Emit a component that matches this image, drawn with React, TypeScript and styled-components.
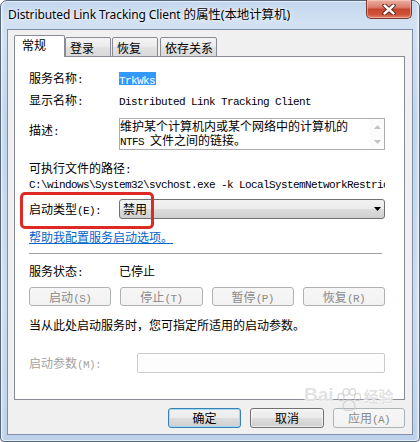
import React from 'react';
import styled, { createGlobalStyle } from 'styled-components';

const CJK = `"Noto Sans CJK SC", "Microsoft YaHei", sans-serif`;
const MONO = `"Liberation Mono", "Courier New", monospace`;

const Global = createGlobalStyle`
  html, body { margin: 0; padding: 0; background: #ffffff; }
  body { width: 420px; height: 442px; overflow: hidden; }
  * { box-sizing: border-box; }
`;

const Window = styled.div`
  position: relative;
  width: 420px;
  height: 442px;
  border: 1px solid #56687f;
  border-radius: 7px 7px 4px 4px;
  background:
    linear-gradient(90deg, rgba(255,255,255,0.35) 0px, rgba(255,255,255,0) 4px, rgba(255,255,255,0) 414px, rgba(255,255,255,0.35) 418px),
    linear-gradient(180deg, #c3d7ee 0%, #d2e1f3 22px, #c0d5ed 120px, #cadcf0 300px, #bdd2ea 100%);
  box-shadow: inset 0 0 0 1px rgba(255,255,255,0.6);
  display: flex;
  flex-direction: column;
  padding: 0 6px 6px;
  font-family: ${CJK};
  font-size: 12px;
  color: #000;
`;

const TitleBar = styled.div`
  height: 28px;
  display: flex;
  align-items: flex-start;
  justify-content: space-between;
`;

const Title = styled.div`
  padding-left: 1px;
  line-height: 28px;
  font-family: "Noto Sans", ${CJK};
  font-size: 12px;
  letter-spacing: -0.1px;
  color: #000;
  text-shadow: 0 0 6px rgba(255,255,255,0.95), 0 0 2px rgba(255,255,255,0.9);
  white-space: nowrap;
`;

const TitleCjk = styled.span`
  font-size: 12.5px;
`;

const CloseButton = styled.div`
  width: 46px;
  height: 19px;
  margin-top: -1px;
  margin-right: 1px;
  border: 1px solid #7a3a30;
  border-top: none;
  border-radius: 0 0 5px 5px;
  background: linear-gradient(180deg, #eab0a3 0%, #dc7f6c 40%, #c8452f 52%, #cf5238 80%, #e2866c 100%);
  box-shadow: inset 0 0 0 1px rgba(255,220,210,0.45);
  display: flex;
  align-items: center;
  justify-content: center;
`;

const Client = styled.div`
  flex: 1;
  background: #f0f0f0;
  border: 1px solid #7d8fa8;
  padding: 5px 7px 0 6px;
  display: flex;
  flex-direction: column;
`;

const TabStrip = styled.div`
  position: relative;
  z-index: 1;
  height: 22px;
  margin-bottom: -1px;
  display: flex;
  align-items: flex-end;
`;

const Tab = styled.div<{ $active?: boolean; $w: number; $ml?: number }>`
  width: ${p => p.$w}px;
  margin-left: ${p => p.$ml ?? 0}px;
  height: ${p => (p.$active ? 22 : 20)}px;
  padding: ${p => (p.$active ? '2px 0 0 7px' : '3px 0 0 4px')};
  line-height: 14px;
  border: 1px solid #898c95;
  border-bottom: ${p => (p.$active ? 'none' : '1px solid #898c95')};
  border-radius: 2px 2px 0 0;
  background: ${p =>
    p.$active
      ? '#ffffff'
      : 'linear-gradient(180deg, #f4f4f4 0%, #ececec 45%, #e0e0e0 55%, #d9d9d9 100%)'};
  white-space: nowrap;
`;

const Panel = styled.div`
  position: relative;
  background: #ffffff;
  border: 1px solid #898c95;
  padding: 14px 19px 26px 14px;
  display: flex;
  flex-direction: column;
`;

const Row = styled.div<{ $mt?: number; $label?: number; $top?: boolean }>`
  display: grid;
  grid-template-columns: ${p => p.$label ?? 90}px 1fr;
  align-items: ${p => (p.$top ? 'start' : 'center')};
  margin-top: ${p => p.$mt ?? 0}px;
`;

const Label = styled.div<{ $muted?: boolean; $pt?: number }>`
  height: ${p => 14 + (p.$pt ?? 0)}px;
  line-height: 14px;
  white-space: nowrap;
  padding-top: ${p => p.$pt ?? 0}px;
  color: ${p => (p.$muted ? '#a3a3a3' : '#000')};
`;

const Line = styled.div<{ $mt?: number; $clip?: boolean }>`
  height: 14px;
  line-height: 14px;
  margin-top: ${p => p.$mt ?? 0}px;
  white-space: nowrap;
  overflow-x: ${p => (p.$clip ? 'clip' : 'visible')};
`;

const Mono = styled.span`
  font-family: ${MONO};
  font-size: 11px;
  letter-spacing: -0.6px;
  line-height: 0;
`;

const Selected = styled.span`
  align-self: start;
  justify-self: start;
  height: 13px;
  background: #3399ff;
  color: #ffffff;
  line-height: 13px;
  padding: 0 1px 0 0;
  margin-top: 1px;
`;

const TextBox = styled.div`
  height: 32px;
  border: 1px solid #abadb3;
  background: #fff;
  display: flex;
`;

const TextBody = styled.div`
  flex: 1;
  line-height: 14px;
  overflow: hidden;
`;

const ScrollBar = styled.div`
  width: 14px;
  display: flex;
  flex-direction: column;
  align-items: center;
  justify-content: space-between;
  padding: 6px 0 5px;
  background: #fbfbfb;
`;

const SelectBox = styled.div`
  height: 20px;
  border: 1px solid #707070;
  border-radius: 3px;
  background: linear-gradient(180deg, #f2f2f2 0%, #ebebeb 50%, #dddddd 50%, #cfcfcf 100%);
  display: flex;
  align-items: center;
  justify-content: space-between;
  padding: 0 3px 0 3px;
  line-height: 14px;
`;

const Link = styled.a`
  display: block;
  height: 14px;
  margin-top: 11px;
  line-height: 14px;
  color: #0066cc;
  text-decoration: underline;
  text-underline-offset: 1px;
  white-space: nowrap;
  align-self: flex-start;
`;

const Separator = styled.div`
  margin-top: 9px;
  height: 1px;
  width: 353px;
  background: #a0a0a0;
`;

const ButtonGrid = styled.div`
  margin-top: 9px;
  display: grid;
  grid-template-columns: repeat(4, 1fr);
  gap: 9px;
`;

const Button = styled.button<{ $w?: number; $default?: boolean }>`
  width: ${p => (p.$w ? `${p.$w}px` : 'auto')};
  height: ${p => (p.$w ? 20 : 19)}px;
  padding: 0;
  font-family: ${CJK};
  font-size: 12px;
  line-height: 14px;
  color: #000;
  border: 1px solid ${p => (p.$default ? '#3c7fb1' : '#707070')};
  border-radius: 3px;
  background: linear-gradient(180deg, #f2f2f2 0%, #ebebeb 50%, #dddddd 50%, #cfcfcf 100%);
  box-shadow: ${p => (p.$default ? 'inset 0 0 0 1px #9cdaf5' : 'inset 0 0 0 1px rgba(255,255,255,0.6)')};
  &:disabled {
    color: #8a8a8a;
    border-color: #adb2b5;
    background: linear-gradient(180deg, #f6f6f6 0%, #f2f2f2 100%);
    box-shadow: none;
  }
`;

const Input = styled.div`
  height: 20px;
  border: 1px solid #c9cbd0;
  border-radius: 2px;
  background: #fdfdfd;
`;

const Footer = styled.div`
  margin-top: 8px;
  display: flex;
  justify-content: flex-end;
  gap: 9px;
`;

const Annotation = styled.div`
  position: absolute;
  left: 5px;
  top: 135px;
  width: 134px;
  height: 37px;
  border: 3px solid #dd2a24;
  border-radius: 5px;
  pointer-events: none;
`;

const Watermark = styled.div`
  position: absolute;
  left: 303px;
  top: 384px;
  display: flex;
  align-items: flex-end;
  gap: 0px;
  pointer-events: none;
  color: rgba(214, 214, 214, 0.7);
  text-shadow: 0 0 1px #ffffff, 0 0 2px #ffffff;
`;

const WmText = styled.span<{ $size: number }>`
  font-family: "Liberation Sans", ${CJK};
  font-weight: bold;
  font-size: ${p => p.$size}px;
  line-height: 1;
  padding-bottom: 8px;
`;

const Arrow = ({ up, color }: { up?: boolean; color: string }) => (
  <svg width="7" height="4" viewBox="0 0 7 4">
    <path d={up ? 'M0 4 L3.5 0 L7 4 Z' : 'M0 0 L7 0 L3.5 4 Z'} fill={color} />
  </svg>
);

const CloseGlyph = () => (
  <svg width="14" height="11" viewBox="0 0 14 11">
    <path d="M2.5 1.5 L11.5 9.5 M11.5 1.5 L2.5 9.5" stroke="#4a1c14" strokeWidth="4.2" strokeLinecap="round" />
    <path d="M2.5 1.5 L11.5 9.5 M11.5 1.5 L2.5 9.5" stroke="#ffffff" strokeWidth="2.4" strokeLinecap="round" />
  </svg>
);

const Paw = () => (
  <svg width="30" height="24" viewBox="0 0 30 24" fill="none" stroke="rgba(200,200,200,0.7)" strokeWidth="1.3">
    <ellipse cx="7" cy="9" rx="3" ry="3.6" />
    <ellipse cx="12" cy="4" rx="3" ry="3.4" />
    <ellipse cx="18.5" cy="4" rx="3" ry="3.4" />
    <ellipse cx="23.5" cy="9" rx="3" ry="3.6" />
    <path d="M9 20 C9 14 12 12 15 12 C18 12 21 14 21 20 C21 23 9 23 9 20 Z" />
  </svg>
);

export default function App() {
  return (
    <>
      <Global />
      <Window>
        <TitleBar>
          <Title>
            Distributed Link Tracking Client <TitleCjk>的属性(本地计算机)</TitleCjk>
          </Title>
          <CloseButton>
            <CloseGlyph />
          </CloseButton>
        </TitleBar>
        <Client>
          <TabStrip>
            <Tab $active $w={51}>常规</Tab>
            <Tab $w={46}>登录</Tab>
            <Tab $w={46} $ml={1}>恢复</Tab>
            <Tab $w={57} $ml={2}>依存关系</Tab>
          </TabStrip>
          <Panel>
            <Row>
              <Label>服务名称<Mono>:</Mono></Label>
              <Selected><Mono>TrkWks</Mono></Selected>
            </Row>
            <Row $mt={8}>
              <Label>显示名称<Mono>:</Mono></Label>
              <Line><Mono>Distributed Link Tracking Client</Mono></Line>
            </Row>
            <Row $mt={11} $top>
              <Label $pt={5}>描述<Mono>:</Mono></Label>
              <TextBox>
                <TextBody>
                  维护某个计算机内或某个网络中的计算机的
                  <br />
                  <Mono>NTFS </Mono>文件之间的链接。
                </TextBody>
                <ScrollBar>
                  <Arrow up color="#c4c4c4" />
                  <Arrow color="#c4c4c4" />
                </ScrollBar>
              </TextBox>
            </Row>
            <Line $mt={11}>可执行文件的路径<Mono>:</Mono></Line>
            <Line $mt={1} $clip>
              <Mono>C:\windows\System32\svchost.exe -k LocalSystemNetworkRestricted</Mono>
            </Line>
            <Row $mt={9}>
              <Label>启动类型<Mono>(E):</Mono></Label>
              <SelectBox>
                <span>禁用</span>
                <Arrow color="#000" />
              </SelectBox>
            </Row>
            <Link>帮助我配置服务启动选项。</Link>
            <Separator />
            <Row $mt={10}>
              <Label>服务状态<Mono>:</Mono></Label>
              <Line>已停止</Line>
            </Row>
            <ButtonGrid>
              <Button disabled>启动<Mono>(S)</Mono></Button>
              <Button disabled>停止<Mono>(T)</Mono></Button>
              <Button disabled>暂停<Mono>(P)</Mono></Button>
              <Button disabled>恢复<Mono>(R)</Mono></Button>
            </ButtonGrid>
            <Line $mt={12}>当从此处启动服务时，您可指定所适用的启动参数。</Line>
            <Row $mt={21} $label={108}>
              <Label $muted>启动参数<Mono>(M):</Mono></Label>
              <Input />
            </Row>
            <Annotation />
          </Panel>
          <Footer>
            <Button $w={73} $default>确定</Button>
            <Button $w={74}>取消</Button>
            <Button $w={72} disabled>应用<Mono>(A)</Mono></Button>
          </Footer>
        </Client>
        <Watermark>
          <WmText $size={19}>Bai</WmText>
          <Paw />
          <WmText $size={15}>经验</WmText>
        </Watermark>
      </Window>
    </>
  );
}
